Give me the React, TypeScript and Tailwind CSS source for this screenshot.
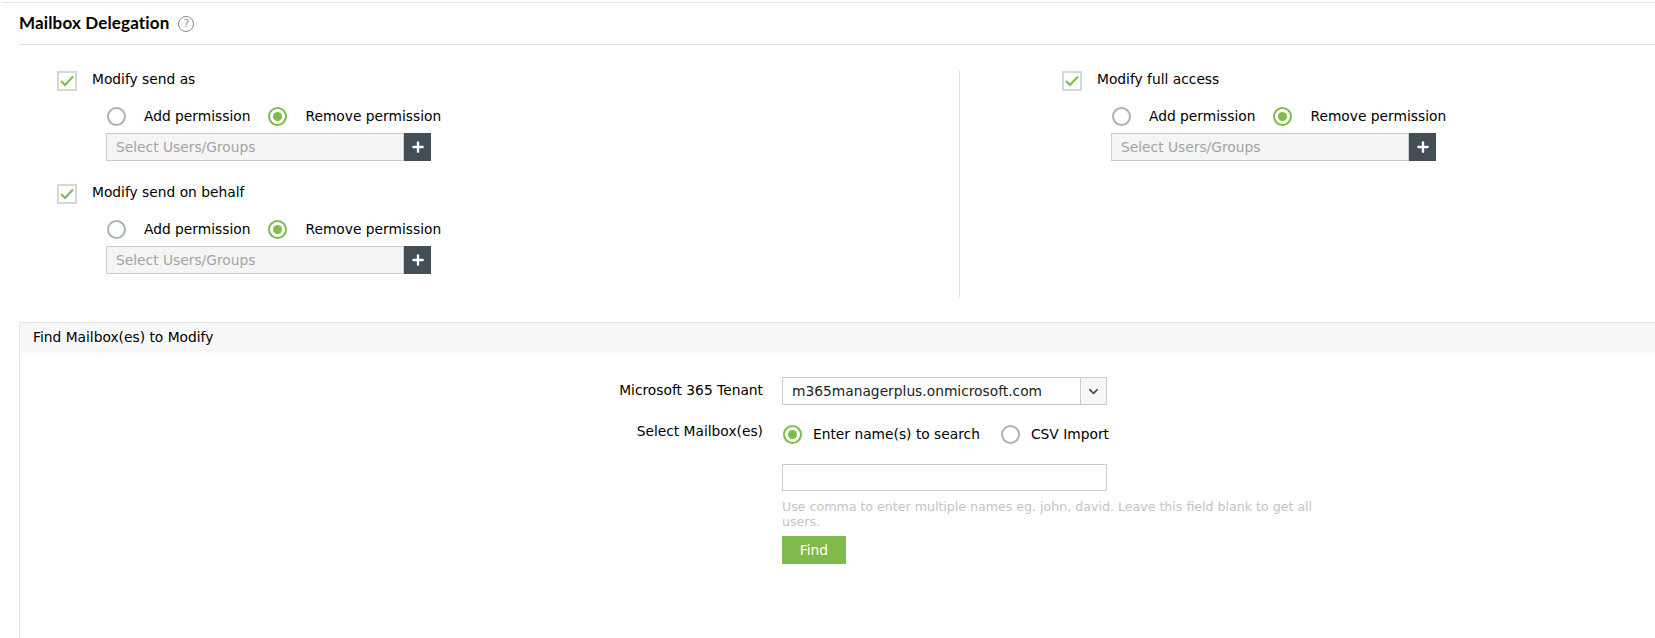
import { Plus, ChevronDown } from "lucide-react";

function Check({ label }: { label: string }) {
  return (
    <div className="flex items-center h-[20px]">
      <span className="w-[20px] h-[20px] border-2 border-[#d5d8da] flex items-center justify-center bg-white">
        <svg width="14" height="12" viewBox="0 0 14 12" fill="none">
          <path d="M1 6 L5 10 L13 1.5" stroke="#7fba4a" strokeWidth="2" />
        </svg>
      </span>
      <span className="ml-[15px] -mt-[4px]">{label}</span>
    </div>
  );
}

function Radio({ on, label }: { on?: boolean; label: string }) {
  return (
    <div className="flex items-center">
      <span
        className={
          on
            ? "w-[19px] h-[19px] rounded-full border-2 border-[#7fba4a] flex items-center justify-center"
            : "w-[19px] h-[19px] rounded-full border-2 border-[#a9b2bb]"
        }
      >
        {on && <span className="w-[9px] h-[9px] rounded-full bg-[#7fba4a]" />}
      </span>
      <span className="ml-[18px]">{label}</span>
    </div>
  );
}

function Perm({ label }: { label: string }) {
  return (
    <div>
      <Check label={label} />
      <div className="ml-[50px] mt-[16px] flex gap-[18px] h-[19px]">
        <Radio label="Add permission" />
        <Radio on label="Remove permission" />
      </div>
      <div className="ml-[49px] mt-[7px] w-[325px] h-[28px] flex">
        <div className="flex-1 border border-[#cccccc] bg-[#f5f5f5] text-[#a3a3a3] pl-[9px] leading-[26px]">
          Select Users/Groups
        </div>
        <div className="w-[27px] bg-[#434e57] flex items-center justify-center text-white">
          <Plus size={16} strokeWidth={3.5} />
        </div>
      </div>
    </div>
  );
}

export default function App() {
  return (
    <div className="w-[1655px] h-[638px] overflow-hidden bg-white text-black text-[13.8px] font-['DejaVu_Sans','Liberation_Sans',sans-serif] pt-[2px]">
      <div className="border-t border-[#e6e6e6] ml-[2px]" />
      <div className="ml-[19px]">
        <div className="h-[42px] border-b border-[#e3e3e3] flex items-center">
          <h1 className="font-['Lato',sans-serif] font-bold text-[17px] tracking-[0.15px] -mt-[1px]">Mailbox Delegation</h1>
          <span className="ml-[9px] w-[16px] h-[16px] rounded-full border border-[#8a8a8a] text-[#8a8a8a] text-[11px] leading-[14px] text-center">?</span>
        </div>
        <div className="flex mt-[25px] h-[227px]">
          <div className="w-[941px] pl-[38px] pt-[1px] flex flex-col gap-[23px] border-r border-[#e0e0e0]">
            <Perm label="Modify send as" />
            <Perm label="Modify send on behalf" />
          </div>
          <div className="pl-[102px] pt-[1px]">
            <Perm label="Modify full access" />
          </div>
        </div>
        <div className="mt-[25px] h-[320px] border-l border-t border-[#e6e6e6]">
          <div className="h-[30px] bg-[#f8f8f8] pl-[13px] leading-[29px]">Find Mailbox(es) to Modify</div>
          <div className="mt-[24px] ml-[587px] grid grid-cols-[156px_325px] gap-x-[19px]">
            <div className="text-right leading-[26px] h-[28px] whitespace-nowrap">Microsoft 365 Tenant</div>
            <div className="h-[28px] border border-[#cccccc] flex">
              <div className="flex-1 pl-[9px] leading-[26px] text-[#222222]">m365managerplus.onmicrosoft.com</div>
              <div className="w-[26px] border-l border-[#cccccc] bg-[#f7f7f7] flex items-center justify-center">
                <ChevronDown size={15} strokeWidth={2.5} color="#434e57" />
              </div>
            </div>
            <div className="text-right mt-[16px] leading-[20px]">Select Mailbox(es)</div>
            <div className="mt-[19px] flex items-center gap-[21px] h-[20px] whitespace-nowrap">
              <div className="ml-[1px] [&_span+span]:ml-[11px]"><Radio on label="Enter name(s) to search" /></div>
              <div className="[&_span+span]:ml-[11px]"><Radio label="CSV Import" /></div>
            </div>
            <div />
            <div className="mt-[20px]">
              <div className="h-[27px] border border-[#cccccc]" />
            </div>
            <div />
            <div className="w-[540px] text-[12.6px] leading-[15px] text-[#c4c4c4] mt-[8px]">
              Use comma to enter multiple names eg. john, david. Leave this field blank to get all users.
            </div>
            <div />
            <div className="mt-[7px]">
              <button className="w-[64px] h-[28px] bg-[#7fba4a] text-white">Find</button>
            </div>
          </div>
        </div>
      </div>
    </div>
  );
}
